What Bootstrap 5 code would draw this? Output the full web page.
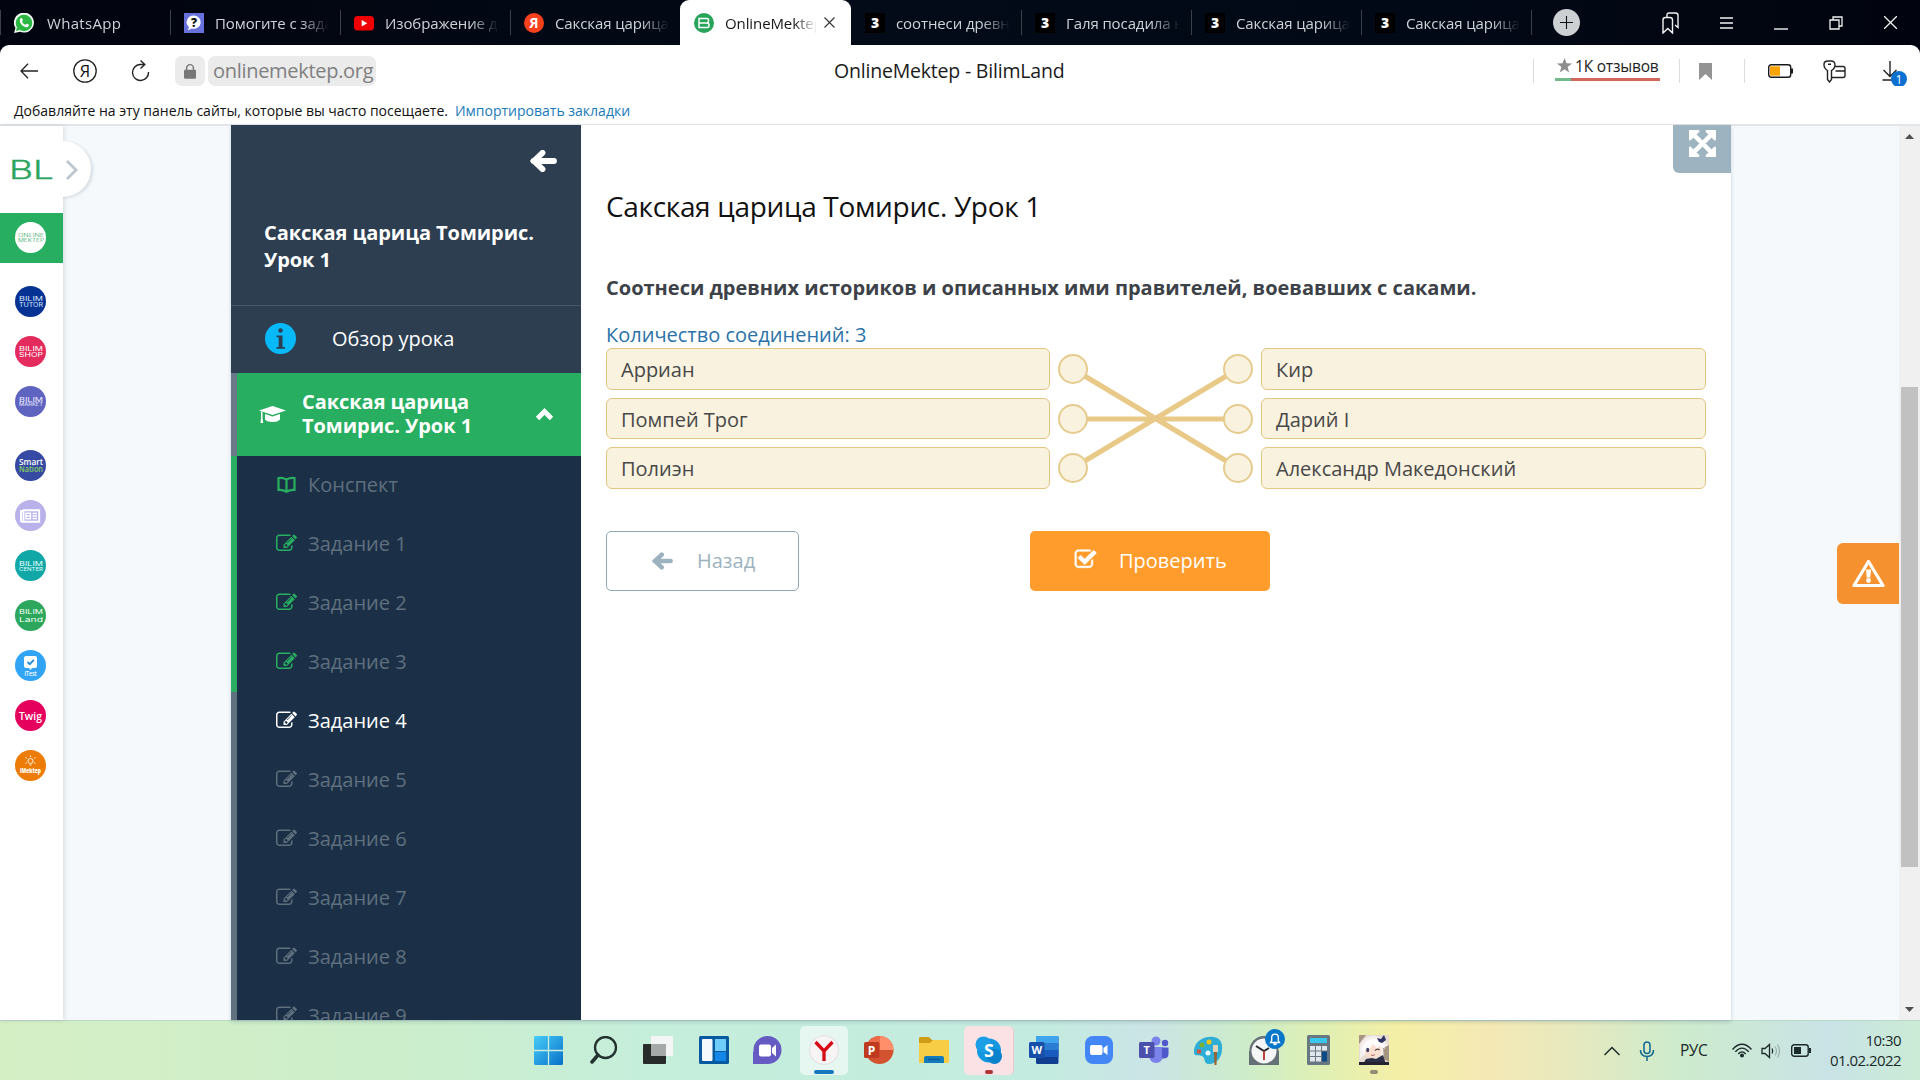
<!DOCTYPE html>
<html lang="ru">
<head>
<meta charset="utf-8">
<meta name="viewport" content="width=device-width, initial-scale=1">
<title>OnlineMektep - BilimLand</title>
<link href="https://cdn.jsdelivr.net/npm/bootstrap@5.3.0/dist/css/bootstrap.min.css" rel="stylesheet">
<style>
body{width:1920px;height:1080px;overflow:hidden;font-family:"Open Sans","Noto Sans",sans-serif;background:#01040f}
svg{display:block;flex:none}
.tabbar{height:45px;background:linear-gradient(90deg,#02040f,#020b17 45%,#020916 75%,#01040e);color:#cfd3d8}
.tab-item{width:170px;height:45px;padding-left:14px;gap:11px;position:relative}
.tab-item:not(.is-on):not(.no-line)::after{content:"";position:absolute;right:-1px;top:10px;width:1px;height:25px;background:#39414b}
.tab-item:first-child::before{content:"";position:absolute;left:0;top:10px;width:1px;height:25px;background:#39414b}
.tab-name{width:114px;overflow:hidden;white-space:nowrap;font-size:15px;letter-spacing:-.1px;line-height:24px;-webkit-mask-image:linear-gradient(90deg,#000 75%,transparent);mask-image:linear-gradient(90deg,#000 75%,transparent)}
.tab-name.first-name{letter-spacing:.3px;margin-left:2px}
.tab-item.is-on{width:171px;background:#fff;color:#16181b;border-radius:9px 9px 0 0}
.tab-item.is-on .tab-name{width:92px}
.plus{width:27px;height:27px;border-radius:50%;background:#cdd0d3;margin-left:22px}
.toolbar{height:52px;background:#fff;border-radius:9px 9px 0 0}
.pill{height:30px;background:#ebebeb;border-radius:7px}
.url{font-size:20px;color:#808080;letter-spacing:-.3px;line-height:30px;width:168px;padding-left:5px;white-space:nowrap}
.page-name{width:230px;font-size:19.5px;letter-spacing:-.2px;color:#1b1b1b;white-space:nowrap;text-align:center}
.vline{width:1px;height:24px;background:#dcdcdc}
.bookmarks{height:29px;background:#fff;border-bottom:2px solid #e3e6e8;padding-left:14px;font-size:14px;line-height:27px;color:#111;gap:7px;white-space:nowrap}
.bookmarks a{color:#1879b9;text-decoration:none}
.review{width:105px;font-size:15.5px;letter-spacing:-.2px;line-height:20px;color:#222;padding-bottom:6px}
.rate{height:3px;margin-top:2px;background:linear-gradient(90deg,#72b98c 16px,#d3675b 16px)}
.viewport-area{height:894px;background:#f5f9fc}
.rail{width:63px;background:#fff;box-shadow:1px 0 5px rgba(50,70,90,.17);position:relative;z-index:2}
.rail-toggle{position:absolute;left:35px;top:15px;width:56px;height:56px;border-radius:50%;background:#fff;box-shadow:2px 1px 3px rgba(50,70,90,.16)}
.rail-cover{position:absolute;inset:0;background:#fff;z-index:0}
.brand{height:87px;padding:31px 0 0 9px;position:relative;z-index:1}
.rail-cell{height:50px;padding-left:15px;position:relative;z-index:1;display:flex;align-items:center}
.rail-cell.is-on{background:#27ae60}
.rail-cell.is-on svg{margin-bottom:2px}
.sheet{margin-left:168px;margin-top:-1px;width:1500px;box-shadow:0 2px 4px rgba(50,80,110,.22)}
.side{width:350px;background:#2c3e50;color:#fff;font-size:20px}
.side-head{height:181px;border-bottom:1px solid #44586a;padding:25px 24px 0 33px}
.side-title{font-weight:700;line-height:27px;font-size:20px;letter-spacing:-.06px;margin-top:47px}
.overview{height:67px;padding:0 0 2px 34px;gap:36px}
.unit{height:83px;background:#27ae60;border-left:6px solid #6b7887;padding:0 27px 0 22px;font-weight:700;line-height:24px}
.unit span{margin:-2px 0 0 16px;letter-spacing:-.05px}
.task{height:59px;padding:0 0 2px 38px;gap:12px;background:#1b3047;border-left:6px solid #5f707f;color:#5f6f7e;line-height:30px}
.task svg{color:#5f6f7e}
.task.done{border-left-color:#2bae62}
.task.done svg{color:#27ae60}
.task.now,.task.now svg{color:#fff}
.task svg{margin-left:1px;margin-right:-1px}
.work{width:1150px;background:#fff;padding:0 0 0 25px}
.full-btn{width:58px;height:48px;border-radius:0 0 0 6px;background:#9db4c0;color:#fff}
.lesson{font-size:28px;line-height:40px;letter-spacing:-.33px;color:#111;margin-top:13px}
.ask{font-size:20px;font-weight:700;line-height:30px;color:#3d4248;margin-top:47px}
.amount{font-size:20px;line-height:28px;height:27px;color:#2a72a8;margin-top:18px}
.opt{border:1px solid #e3c682;border-radius:6px;background:#f9f2df;color:#484848;font-size:20px;line-height:41px;padding-left:14px}
.opts{width:445px;display:grid;grid-template-rows:42px 41px 42px;row-gap:8px}
.opts-left{width:444px}
.act{height:60px;border-radius:5px;font-size:20px;padding:0;display:flex;align-items:center;white-space:nowrap}
.act-back{width:193px;border:1px solid #90a9b8;color:#9db2bf;padding-left:45px;gap:24px}
.act-check{width:240px;background:#ff9c2b;color:#fff;padding-left:44px;gap:22px;border:0}
.act-check svg{stroke:#fff;stroke-width:40px;margin-top:-3px}
.gutter{width:168px}
.warn-btn{width:62px;height:61px;border-radius:6px 0 0 6px;background:#f5922f;margin-top:417px}
.sbar{width:21px;background:#f0f0f0;height:894px}
.thumb{width:17px;height:480px;background:#c1c1c1}
.taskbar{height:60px;border-top:1px solid #b9d8c8;background:linear-gradient(90deg,#d5efc5 0,#cceecb 400px,#c5eedb 650px,#c4ebe0 1050px,#cbe4e6 1150px,#cceccb 1240px,#dff0b4 1320px,#f5efa6 1400px,#f4e9b5 1490px,#e9e9bd 1560px,#cdebcd 1680px,#c9e3e6 1830px,#cbebd5 1920px)}
.slot{width:55px;height:59px;display:flex;align-items:center;justify-content:center;position:relative;padding-bottom:1px}
.slot-on{position:absolute;top:5px;height:49px;border-radius:5px}
.slot svg{position:relative}
.dash{position:absolute;bottom:6px;height:4px;border-radius:2px}
.clock{font-size:15px;line-height:20px;text-align:right;color:#1b2a2a;letter-spacing:-.55px;width:80px;padding-bottom:2px}
.lang{font-size:15.5px;letter-spacing:-.5px;color:#1b2a2a;width:26px}
</style>
<script src="https://cdn.jsdelivr.net/npm/bootstrap@5.3.0/dist/js/bootstrap.bundle.min.js"></script>
</head>
<body>
<svg width="0" height="0" class="position-absolute">
<symbol id="edit" viewBox="0 0 1792 1792"><path fill="currentColor" d="M888 1184l116-116-152-152-116 116v56h96v96h56zm440-720q-16-16-33 1l-350 350q-17 17-1 33t33-1l350-350q17-17 1-33zm80 594v190q0 119-84.500 203.500t-203.500 84.500h-832q-119 0-203.500-84.500t-84.500-203.500v-832q0-119 84.500-203.500t203.500-84.500h832q63 0 117 25 15 7 18 23 3 17-9 29l-49 49q-14 14-32 8-23-6-45-6h-832q-66 0-113 47t-47 113v832q0 66 47 113t113 47h832q66 0 113-47t47-113v-126q0-13 9-22l64-64q15-15 35-7t20 29zm-96-738l288 288-672 672h-288v-288zm444 132l-92 92-288-288 92-92q28-28 68-28t68 28l152 152q28 28 28 68t-28 68z"/></symbol>
<symbol id="check" viewBox="0 0 1792 1792"><path fill="currentColor" d="M1472 930v318q0 119-84.500 203.500t-203.500 84.500h-832q-119 0-203.500-84.500t-84.500-203.500v-832q0-119 84.500-203.500t203.500-84.500h832q63 0 117 25 15 7 18 23 3 17-9 29l-49 49q-10 10-23 10-3 0-9-2-23-6-45-6h-832q-66 0-113 47t-47 113v832q0 66 47 113t113 47h832q66 0 113-47t47-113v-254q0-13 9-22l64-64q10-10 23-10 6 0 12 3 20 8 20 29zm231-489l-814 814q-24 24-57 24t-57-24l-430-430q-24-24-24-57t24-57l110-110q24-24 57-24t57 24l263 263 647-647q24-24 57-24t57 24l110 110q24 24 24 57t-24 57z"/></symbol>
<symbol id="expand" viewBox="128 128 1536 1536"><path fill="currentColor" stroke="currentColor" stroke-width="40" d="M1411 541l-355 355 355 355 144-144q29-31 70-14 39 17 39 59v448q0 26-19 45t-45 19h-448q-42 0-59-40-17-39 14-69l144-144-355-355-355 355 144 144q31 30 14 69-17 40-59 40h-448q-26 0-45-19t-19-45v-448q0-42 40-59 39-17 69 14l144 144 355-355-355-355-144 144q-19 19-45 19-12 0-24-5-40-17-40-59v-448q0-26 19-45t45-19h448q42 0 59 40 17 39-14 69l-144 144 355 355 355-355-144-144q-31-30-14-69 17-40 59-40h448q26 0 45 19t19 45v448q0 42-39 59-13 5-25 5-26 0-45-19z"/></symbol>
<symbol id="arrow" viewBox="0 0 27 22"><path d="M3.500 11H24M12.500 2.800L4 11l8.500 8.200" fill="none" stroke="currentColor" stroke-width="5.800" stroke-linecap="round" stroke-linejoin="miter"/></symbol>
<symbol id="three" viewBox="0 0 20 20"><rect width="20" height="20" fill="#000"/><text x="10" y="15" text-anchor="middle" font-family="Open Sans,sans-serif" font-weight="800" font-size="14" fill="#fff">3</text></symbol>
</svg>

<header class="tabbar d-flex">
  <div class="tab-item d-flex align-items-center"><svg width="20" height="20" viewBox="0 0 20 20"><path d="M0 20l1.500-5A10 10 0 1 1 6 18.800z" fill="#f3fff3"/><circle cx="10" cy="10" r="8.300" fill="#2cb742"/><path d="M2 18l1-4 3 3z" fill="#2cb742"/><path d="M6.500 5.500c1-1 1.600-.4 2.300 1.700.2.700-.8 1-.7 1.500.8 1.600 1.800 2.500 3.400 3.100.5 0 .9-1.200 1.500-1 2 .9 2.300 1 1.700 2.200-1.500 2.600-5 .8-6.800-1-1.600-1.600-3-4.500-1.400-6.500z" fill="#fff"/></svg><span class="tab-name first-name">WhatsApp</span></div>
  <div class="tab-item d-flex align-items-center"><svg width="20" height="20" viewBox="0 0 20 20"><rect width="20" height="20" fill="#6870dc"/><path d="M10 2.500a7 6.600 0 1 1-2.300 12.900L4 17.500l.9-3.600A7 6.600 0 0 1 10 2.500z" fill="#fff"/><text x="10" y="14" text-anchor="middle" font-family="Open Sans" font-weight="800" font-size="12" fill="#111">?</text></svg><span class="tab-name">Помогите с заданием</span></div>
  <div class="tab-item d-flex align-items-center"><svg width="20" height="20" viewBox="0 0 20 20"><rect y="3" width="20" height="14.500" rx="3.500" fill="#f00000"/><path d="M7.700 7l5.500 3.200-5.500 3.200z" fill="#fff"/></svg><span class="tab-name">Изображение древних</span></div>
  <div class="tab-item no-line d-flex align-items-center"><svg width="20" height="20" viewBox="0 0 20 20"><circle cx="10" cy="10" r="10" fill="#f8401c"/><text x="10" y="15" text-anchor="middle" font-family="Open Sans" font-weight="700" font-size="14" fill="#fff">Я</text></svg><span class="tab-name">Сакская царица То</span></div>
  <div class="tab-item is-on d-flex align-items-center"><svg width="20" height="20" viewBox="0 0 20 20"><circle cx="10" cy="10" r="10" fill="#27a35a"/><path d="M5 5.500h8q1.500 0 1.500 1.500v1q0 1.500-1.500 2 2 0 2 2v1q0 1.500-1.500 1.500H5zM5 10h8" fill="none" stroke="#fff" stroke-width="1.500"/></svg><span class="tab-name">OnlineMektep</span><svg width="11" height="11" viewBox="0 0 11 11" style="margin-left:-4px"><path d="M.5.500l10 10m0-10l-10 10" stroke="#333" stroke-width="1.100"/></svg></div>
  <div class="tab-item d-flex align-items-center"><svg width="20" height="20"><use href="#three"/></svg><span class="tab-name">соотнеси древних</span></div>
  <div class="tab-item d-flex align-items-center"><svg width="20" height="20"><use href="#three"/></svg><span class="tab-name">Галя посадила на</span></div>
  <div class="tab-item d-flex align-items-center"><svg width="20" height="20"><use href="#three"/></svg><span class="tab-name">Сакская царица То</span></div>
  <div class="tab-item d-flex align-items-center"><svg width="20" height="20"><use href="#three"/></svg><span class="tab-name">Сакская царица То</span></div>
  <div class="d-flex align-items-center flex-grow-1">
    <span class="plus d-flex align-items-center justify-content-center"><svg width="13" height="13"><path d="M6.500 0v13M0 6.500h13" stroke="#111" stroke-width="1.100"/></svg></span>
    <div class="d-flex align-items-center ms-auto" style="gap:41px;margin-right:23px">
      <svg width="17" height="22" viewBox="0 0 17 22" fill="none" stroke="#f2f2f2" stroke-width="1.400"><path d="M1 21V8q0-2.500 2.500-2.500H8Q10.500 5.500 10.500 8v13L5.800 16.500zM5 5V3Q5 1 7 1h6.500Q16 1 16 3.500v12l-3-2.500"/></svg>
      <svg width="13" height="12" stroke="#f2f2f2" stroke-width="1.400"><path d="M0 1h13M0 6h13M0 11h13"/></svg>
      <svg width="14" height="14" stroke="#f2f2f2" stroke-width="1.400"><path d="M0 13h14"/></svg>
      <svg width="14" height="14" fill="none" stroke="#f2f2f2" stroke-width="1.300"><path d="M1 4h9v9H1zM4 4V1h9v9h-3"/></svg>
      <svg width="13" height="13" stroke="#f2f2f2" stroke-width="1.300"><path d="M0 0l13 13M13 0L0 13"/></svg>
    </div>
  </div>
</header>

<div class="toolbar d-flex align-items-center">
  <svg width="18" height="16" viewBox="0 0 18 16" style="margin-left:20px" fill="none" stroke="#222" stroke-width="1.300"><path d="M18 8H1M8 .7L1 8l7 7.300"/></svg>
  <svg width="24" height="24" viewBox="0 0 24 24" style="margin-left:35px"><circle cx="12" cy="12" r="11.200" fill="none" stroke="#222" stroke-width="1.300"/><text x="12" y="18" text-anchor="middle" font-family="Open Sans" font-size="16.500" fill="#111">Я</text></svg>
  <svg width="19" height="22" viewBox="0 0 19 22" style="margin-left:34px" fill="none" stroke="#222" stroke-width="1.400"><path d="M17.500 12A8 8 0 1 1 9 4.500h4M9.500.5l4.300 4-4.300 4"/></svg>
  <span class="pill d-flex align-items-center justify-content-center" style="width:30px;margin-left:25px"><svg width="12" height="17" viewBox="0 0 14 18"><rect y="7" width="14" height="10.500" rx="1.500" fill="#777"/><path d="M3 8V5a4 4 0 0 1 8 0v3" fill="none" stroke="#777" stroke-width="1.700"/></svg></span>
  <span class="pill url" style="margin-left:3px">onlinemektep.org</span>
  <span class="page-name" style="margin-left:458px">OnlineMektep - BilimLand</span>
  <span class="vline" style="margin-left:469px"></span>
  <div class="review" style="margin-left:21px"><div class="d-flex align-items-center" style="gap:3px;padding-left:2px"><svg width="15" height="15" viewBox="0 0 15 15"><path d="M7.500 0l2 5.300 5.500.2-4.400 3.400 1.600 5.600-4.700-3.200-4.700 3.200 1.600-5.600L0 5.500l5.500-.2z" fill="#8d8d8d"/></svg><span>1К отзывов</span></div><div class="rate"></div></div>
  <span class="vline" style="margin-left:19px"></span>
  <svg width="13" height="17" style="margin-left:19px"><path d="M0 0h13v17L6.500 11 0 17z" fill="#939393"/></svg>
  <span class="vline" style="margin-left:32px"></span>
  <svg width="25" height="14" viewBox="0 0 25 14" style="margin-left:23px"><rect x=".7" y=".7" width="22" height="12.600" rx="2.500" fill="none" stroke="#1a1a1a" stroke-width="1.400"/><rect x="2" y="2.300" width="10" height="9.400" fill="#f9a400"/><path d="M24 4.500v5" stroke="#1a1a1a" stroke-width="2"/></svg>
  <svg width="23" height="23" viewBox="0 0 23 23" style="margin-left:30px" fill="none" stroke="#222" stroke-width="1.400"><path d="M4.500 10.500Q1 8.500 1 4.500 1 1 5 1h3q4 0 4 4 0 3.500-3.500 5.500v9L6.500 22l-2-2.500zM5 4.300h3M12 6.500h8q2 0 2 2v7q0 2-2 2H9M12.500 11H22"/></svg>
  <div class="position-relative" style="margin-left:36px"><svg width="26" height="30" viewBox="0 0 26 30"><path d="M8 5v15M1.500 14L8 20.500l6.500-6.500M.5 24H11" fill="none" stroke="#222" stroke-width="1.400"/><circle cx="17" cy="25" r="8" fill="#0b70cf" transform="translate(0 -2)"/><text x="17" y="27.500" font-size="12" font-family="Open Sans" fill="#fff" text-anchor="middle">1</text></svg></div>
</div>
<div class="bookmarks d-flex"><span>Добавляйте на эту панель сайты, которые вы часто посещаете.</span><a href="#">Импортировать закладки</a></div>

<div class="viewport-area d-flex">
  <nav class="rail">
    <div class="rail-toggle"></div><div class="rail-cover"></div>
    <div class="brand"><svg width="74" height="26" viewBox="0 0 74 26"><text x="0" y="21.500" font-family="Inter,sans-serif" font-size="25" font-weight="300" fill="#2ba55e" stroke="#2ba55e" stroke-width=".3" textLength="45" lengthAdjust="spacingAndGlyphs">BL</text><path d="M58 4l9 9-9 9" fill="none" stroke="#bcc6cf" stroke-width="2.800"/></svg></div>
    <div class="rail-cell is-on"><svg width="31" height="31" font-family="Inter,sans-serif"><circle cx="15.500" cy="15.500" r="15.500" fill="#fff"/><g fill="#2ba55e" font-size="5" font-weight="300"><text x="3" y="14.500" textLength="26" lengthAdjust="spacingAndGlyphs">ONLINE</text><text x="3" y="20" textLength="26" lengthAdjust="spacingAndGlyphs">MEKTEP</text></g></svg></div>
    <div class="rail-cell" style="margin-top:13px"><svg width="31" height="31" font-family="Inter,sans-serif"><circle cx="15.500" cy="15.500" r="15.500" fill="#063393"/><g fill="#dce5ff" font-size="6.800"><text x="4" y="15" textLength="24" lengthAdjust="spacingAndGlyphs">BILIM</text><text x="4" y="20.500" textLength="24" font-size="5.800" lengthAdjust="spacingAndGlyphs">TUTOR</text></g></svg></div>
    <div class="rail-cell"><svg width="31" height="31" font-family="Inter,sans-serif"><circle cx="15.500" cy="15.500" r="15.500" fill="#e32b5d"/><g fill="#fff" font-size="6.800"><text x="4" y="15" textLength="24" lengthAdjust="spacingAndGlyphs">BILIM</text><text x="4" y="21" textLength="24" lengthAdjust="spacingAndGlyphs">SHOP</text></g></svg></div>
    <div class="rail-cell"><svg width="31" height="31" font-family="Inter,sans-serif"><circle cx="15.500" cy="15.500" r="15.500" fill="#6064c1"/><g fill="#eeeeff" font-size="6.800"><text x="4" y="15.500" textLength="24" lengthAdjust="spacingAndGlyphs">BILIM</text><text x="4" y="20" font-size="4.200" textLength="24" lengthAdjust="spacingAndGlyphs">MARKET</text></g></svg></div>
    <div class="rail-cell" style="margin-top:14px"><svg width="31" height="31" font-family="Open Sans,sans-serif"><circle cx="15.500" cy="15.500" r="15.500" fill="#364aa4"/><g font-size="8" font-weight="600"><text x="4" y="15" fill="#fff" textLength="24" lengthAdjust="spacingAndGlyphs">Smart</text><text x="4" y="21.500" fill="#83cf5f" textLength="24" lengthAdjust="spacingAndGlyphs">Nation</text></g></svg></div>
    <div class="rail-cell"><svg width="31" height="31"><circle cx="15.500" cy="15.500" r="15.500" fill="#b9b2ea"/><path d="M8.500 10.300h15.700v11.500H7q-1 0-1-1.500V11h2.500zM8.500 11v10" fill="none" stroke="#fff" stroke-width="1.900"/><path d="M11 13.200h4.500v5.500H11zM11 16h4.500M17.500 13.500H22M17.500 16H22M17.500 18.500H22" fill="none" stroke="#fff" stroke-width="1.400"/></svg></div>
    <div class="rail-cell"><svg width="31" height="31" font-family="Inter,sans-serif"><circle cx="15.500" cy="15.500" r="15.500" fill="#10a7a6"/><g fill="#e5ffff" font-size="6.800"><text x="4" y="16" textLength="24" lengthAdjust="spacingAndGlyphs">BILIM</text><text x="4" y="20.500" font-size="4.800" textLength="24" lengthAdjust="spacingAndGlyphs">CENTER</text></g></svg></div>
    <div class="rail-cell"><svg width="31" height="31" font-family="Inter,sans-serif"><circle cx="15.500" cy="15.500" r="15.500" fill="#2da75d"/><g fill="#f0fff5" font-size="6.500"><text x="4" y="14" textLength="24" lengthAdjust="spacingAndGlyphs">BILIM</text><text x="4" y="22" textLength="24" lengthAdjust="spacingAndGlyphs">Land</text></g></svg></div>
    <div class="rail-cell"><svg width="31" height="31" font-family="Open Sans,sans-serif"><circle cx="15.500" cy="15.500" r="15.500" fill="#31a4f5"/><path d="M11 6h9q2 0 2 2v8q0 2-2 2h-3l-1.500 2L14 18h-3q-2 0-2-2V8q0-2 2-2z" fill="#fff"/><path d="M12.500 12l2.300 2.200 4-4.400" fill="none" stroke="#248dda" stroke-width="1.800"/><text x="9.500" y="26" fill="#fff" font-size="7" font-weight="600" textLength="12" lengthAdjust="spacingAndGlyphs">iTest</text></svg></div>
    <div class="rail-cell"><svg width="31" height="31" font-family="Open Sans,sans-serif"><circle cx="15.500" cy="15.500" r="15.500" fill="#e5005e"/><text x="4" y="19.500" fill="#fff" font-size="11.500" font-weight="600" textLength="23" lengthAdjust="spacingAndGlyphs">Twig</text></svg></div>
    <div class="rail-cell"><svg width="31" height="31" font-family="Open Sans,sans-serif"><circle cx="15.500" cy="15.500" r="15.500" fill="#ec7c05"/><circle cx="15.500" cy="11" r="2.500" fill="none" stroke="#fff" stroke-width=".9"/><path d="M15.500 7V5.500M12 8.500l-1.500-1M19 8.500l1.500-1M12 12.500l-1.500 1M19 12.500l1.500 1M14.500 15h2" stroke="#fff" stroke-width=".9"/><text x="5" y="22.500" fill="#fff" font-size="6" font-weight="800" textLength="21" lengthAdjust="spacingAndGlyphs">iMektep</text></svg></div>
  </nav>

  <div class="sheet d-flex flex-shrink-0">
    <aside class="side overflow-hidden">
      <div class="side-head">
        <svg width="27" height="22" class="ms-auto"><use href="#arrow"/></svg>
        <div class="side-title">Сакская царица Томирис.<br>Урок 1</div>
      </div>
      <div class="overview d-flex align-items-center">
        <svg width="31" height="31"><circle cx="15.500" cy="15.500" r="15.500" fill="#08b9fa"/><circle cx="15.500" cy="7.500" r="2.200" fill="#2c3e50"/><path d="M11.500 12.500h6v11.500h2.500v1.800h-8.500V24h2.200v-9.700h-2.200z" fill="#2c3e50"/></svg><span>Обзор урока</span>
      </div>
      <div class="unit d-flex align-items-center">
        <svg width="27" height="19" viewBox="0 0 27 19" fill="#fff"><path d="M13.500 1L27 5.500 13.500 10 0 5.500z"/><path d="M6 9l7.500 2.500L21 9v5.500Q19 17 13.500 17T6 14.500zM2 6.500h1.500V13l.7 5H1.500L2 13z"/></svg>
        <span>Сакская царица<br>Томирис. Урок 1</span>
        <svg width="19" height="13" class="ms-auto"><path d="M2.500 10.500l7-7 7 7" fill="none" stroke="#fff" stroke-width="4.800"/></svg>
      </div>
      <div class="task done d-flex align-items-center"><svg width="21" height="18" viewBox="0 0 21 18"><path d="M10.500 3.500Q7 1.500 2.500 2v12q4.500-.3 8 1.700 3.500-2 8-1.700V2q-4.500-.5-8 1.500zm0 0v12" fill="none" stroke="currentColor" stroke-width="2.200"/></svg><span>Конспект</span></div>
      <div class="task done d-flex align-items-center"><svg width="21" height="21"><use href="#edit"/></svg><span>Задание 1</span></div>
      <div class="task done d-flex align-items-center"><svg width="21" height="21"><use href="#edit"/></svg><span>Задание 2</span></div>
      <div class="task done d-flex align-items-center"><svg width="21" height="21"><use href="#edit"/></svg><span>Задание 3</span></div>
      <div class="task now d-flex align-items-center"><svg width="21" height="21"><use href="#edit"/></svg><span>Задание 4</span></div>
      <div class="task d-flex align-items-center"><svg width="21" height="21"><use href="#edit"/></svg><span>Задание 5</span></div>
      <div class="task d-flex align-items-center"><svg width="21" height="21"><use href="#edit"/></svg><span>Задание 6</span></div>
      <div class="task d-flex align-items-center"><svg width="21" height="21"><use href="#edit"/></svg><span>Задание 7</span></div>
      <div class="task d-flex align-items-center"><svg width="21" height="21"><use href="#edit"/></svg><span>Задание 8</span></div>
      <div class="task d-flex align-items-center"><svg width="21" height="21"><use href="#edit"/></svg><span>Задание 9</span></div>
    </aside>
    <main class="work">
      <div class="full-btn ms-auto d-flex justify-content-center"><svg width="27" height="27" style="margin-top:5px"><use href="#expand"/></svg></div>
      <div class="lesson">Сакская царица Томирис. Урок 1</div>
      <div class="ask">Соотнеси древних историков и описанных ими правителей, воевавших с саками.</div>
      <div class="amount">Количество соединений: 3</div>
      <div class="d-flex">
        <div class="opts opts-left"><div class="opt">Арриан</div><div class="opt">Помпей Трог</div><div class="opt">Полиэн</div></div>
        <svg width="211" height="141" viewBox="1050 348 211 141"><g stroke="#e8c987" stroke-width="5"><path d="M1073 369l165 99M1073 419h165M1073 468l165-99"/></g><g fill="#f9f2df" stroke="#e5cb8e" stroke-width="2"><circle cx="1073" cy="369" r="14"/><circle cx="1073" cy="419" r="14"/><circle cx="1073" cy="468" r="14"/><circle cx="1238" cy="369" r="14"/><circle cx="1238" cy="419" r="14"/><circle cx="1238" cy="468" r="14"/></g></svg>
        <div class="opts"><div class="opt">Кир</div><div class="opt">Дарий I</div><div class="opt">Александр Македонский</div></div>
      </div>
      <div class="d-flex" style="margin-top:42px">
        <button class="btn act act-back"><svg width="21" height="18"><use href="#arrow"/></svg>Назад</button>
        <button class="btn act act-check" style="margin-left:231px"><svg width="23" height="23"><use href="#check"/></svg>Проверить</button>
      </div>
    </main>
  </div>
  <div class="gutter d-flex justify-content-end"><div class="warn-btn d-flex align-items-center justify-content-center"><svg width="33" height="29" viewBox="0 0 33 29"><path d="M16.500 2.500L31 26.500H2z" fill="none" stroke="#fff" stroke-width="3.200" stroke-linejoin="round"/><path d="M14 10.500h5l-.7 8h-3.600z" fill="#fff"/><circle cx="16.500" cy="21.500" r="2.400" fill="#fff"/></svg></div></div>
  <div class="sbar d-flex flex-column align-items-center"><svg width="9" height="6" style="margin-top:8px"><path d="M0 5l4.500-5L9 5z" fill="#505050"/></svg><div class="thumb" style="margin-top:247px"></div><svg width="9" height="6" class="mt-auto" style="margin-bottom:7px"><path d="M0 0l4.500 5L9 0z" fill="#505050"/></svg></div>
</div>

<footer class="taskbar d-flex align-items-center">
  <div class="d-flex" style="margin-left:521px">
    <div class="slot"><svg width="29" height="29"><defs><linearGradient id="wg" x2="1" y2="1"><stop stop-color="#46cdf9"/><stop offset="1" stop-color="#0870c8"/></linearGradient></defs><rect width="29" height="29" rx="1.500" fill="url(#wg)"/><path d="M14.500 0v29M0 14.500h29" stroke="#c9eedd" stroke-width="1.300"/></svg></div>
    <div class="slot"><svg width="28" height="28" fill="none" stroke="#23312f"><circle cx="15.500" cy="11.500" r="10.500" stroke-width="2.300"/><path d="M8 19l-6 7" stroke-width="3.500" stroke-linecap="round"/></svg></div>
    <div class="slot"><svg width="32" height="29"><rect y="8" width="23" height="20" rx="1" fill="#272c2b"/><rect x="8" y="0" width="22" height="20" rx="1" fill="#f3f6f4"/><path d="M8 8h15v12H8z" fill="#a5aaa8"/></svg></div>
    <div class="slot"><svg width="30" height="28"><rect width="30" height="28" rx="1.500" fill="#075a9f"/><rect x="3" y="3" width="10.500" height="22" rx="1" fill="#f5f9fc"/><path d="M16 3h11v12H16z" fill="#70cdfa"/><path d="M16 16h11v9H16z" fill="#1287e8"/></svg></div>
    <div class="slot"><svg width="31" height="29"><circle cx="14.500" cy="14" r="14" fill="#665bc2"/><path d="M0 15v13h13z" fill="#665bc2"/><rect x="6" y="8.500" width="12" height="12" rx="2" fill="#fff"/><path d="M19 12l4-3.500v12L19 17z" fill="#fff"/></svg></div>
    <div class="slot"><div class="slot-on" style="width:48px;left:4px;background:#e6f6f1"></div><svg width="30" height="30"><circle cx="15" cy="15" r="14.500" fill="#f7f4f5" stroke="#e4dfe0"/><path d="M6.500 7l8.500 9 8.500-9M15 15v11" fill="none" stroke="#d50c18" stroke-width="3.300"/></svg><span class="dash" style="width:20px;background:#1578bf"></span></div>
    <div class="slot"><svg width="30" height="29"><circle cx="15.500" cy="14" r="14" fill="#d35230"/><path d="M15.500 0a14 14 0 0 1 14 14h-14z" fill="#ff8f6b"/><path d="M15.500 0a14 14 0 0 0-12.500 9l5 5h7.500z" fill="#ed6c47"/><rect y="6" width="15.500" height="16" rx="1.500" fill="#bf3b20"/><text x="7.500" y="18.500" text-anchor="middle" font-size="12" font-weight="700" fill="#fff">P</text></svg></div>
    <div class="slot"><svg width="30" height="28"><path d="M0 2q0-1 1-1h9l3 3h17v22H0z" fill="#cf9e16"/><path d="M0 7h11l3-3h15q1 0 1 1v21q0 1-1 1H0z" fill="#f8cd46"/><path d="M5 27v-5q0-2 2-2h16q2 0 2 2v5z" fill="#137cbc"/><path d="M9 23.500h12" stroke="#0a5d99" stroke-width="1.500"/></svg></div>
    <div class="slot"><div class="slot-on" style="width:50px;left:3px;background:#fae2e5;border-right:1px solid #ecc9ce"></div><svg width="28" height="29"><circle cx="14" cy="14.500" r="12" fill="#1196df"/><circle cx="8.500" cy="8.500" r="8" fill="#1b9ee5"/><circle cx="19.500" cy="20.500" r="7.500" fill="#0a83cc"/><text x="14" y="21" text-anchor="middle" font-size="18" font-weight="700" fill="#fff">S</text></svg><span class="dash" style="width:8px;background:#ae3535"></span></div>
    <div class="slot"><svg width="30" height="28"><rect x="7" width="22.500" height="28" rx="1.500" fill="#103f91"/><path d="M7 0h22.500v7H7z" fill="#41a5ee"/><path d="M7 7h22.500v7H7z" fill="#2b7cd3"/><path d="M7 14h22.500v7H7z" fill="#185abd"/><rect y="6" width="15.500" height="16" rx="1.500" fill="#174fa9"/><text x="7.700" y="18" text-anchor="middle" font-size="11" font-weight="700" fill="#fff">W</text></svg></div>
    <div class="slot"><svg width="28" height="28"><rect width="28" height="28" rx="8" fill="#4387f6"/><rect x="5" y="9" width="12.500" height="10" rx="2" fill="#fff"/><path d="M18.500 12l4-3v10l-4-3z" fill="#fff"/></svg></div>
    <div class="slot"><svg width="30" height="28"><circle cx="17" cy="5" r="4.500" fill="#7b83eb"/><circle cx="26" cy="7" r="3.200" fill="#5059c9"/><path d="M10 11h14v9q-1 7-7 7t-7-7z" fill="#7b83eb"/><path d="M23 11.500h6.500V18q0 5-6.500 4.500z" fill="#5059c9"/><rect y="6" width="15.500" height="16" rx="1.500" fill="#4b50ad"/><text x="7.700" y="18" text-anchor="middle" font-size="11" font-weight="700" fill="#fff">T</text></svg></div>
    <div class="slot"><svg width="30" height="29"><path d="M15 1C24 0 29 5 28 13c0 8-5 15-13 15-6 0-3-6-7-8s-7 1-8-3C-1 8 7 1 15 1z" fill="#2eaed5"/><circle cx="8" cy="9" r="2.500" fill="#79b32d"/><circle cx="15" cy="6" r="2.500" fill="#f4c51b"/><circle cx="5" cy="15.500" r="2.300" fill="#d1583f"/><circle cx="14" cy="17" r="2.500" fill="#e4faff"/><path d="M19 9h5v7h-5z" fill="#e1d3b9"/><path d="M20 16h3l-.5 13h-2z" fill="#97632f"/></svg></div>
    <div class="slot"><svg width="30" height="29"><path d="M0 15h30v14H0z" fill="#656f76"/><circle cx="15" cy="14.500" r="14.500" fill="#656f76"/><circle cx="15" cy="15" r="12.500" fill="#f4f5f6"/><path d="M7 10l8 5 5-3" fill="none" stroke="#252c31" stroke-width="2"/><path d="M15 15v9" stroke="#bd4137" stroke-width="2"/></svg><svg width="20" height="20" class="position-absolute" style="right:6px;top:8px"><circle cx="10" cy="10" r="10" fill="#0877c9"/><path d="M5.500 13.500l1.200-2V8.500a3.300 3.300 0 0 1 6.600 0v3l1.200 2zM8.500 14.500q1.500 2 3 0" fill="none" stroke="#fff" stroke-width="1.300"/></svg></div>
    <div class="slot"><svg width="23" height="30"><rect width="23" height="30" rx="1.500" fill="#697780"/><rect x="3" y="3" width="17" height="5" fill="#3ac7ee"/><path d="M3 11h5v4.500H3zM9 11h5v4.500H9zM15 11h5v4.500h-5zM3 16.500h5V21H3zM9 16.500h5V21H9zM3 22h5v4.500H3zM9 22h5v4.500H9z" fill="#e1e8ed"/><path d="M15 16.500h5v10h-5z" fill="#0b4b86"/></svg></div>
    <div class="slot"><svg width="30" height="30"><rect width="30" height="30" fill="#e6dcd2"/><path d="M1 10Q5 1 15 1t14 10v12l-6-3H5l-4 4z" fill="#f5f0ee"/><path d="M0 0h7L0 9zM24 13l6-3v17l-5-3z" fill="#a79584"/><ellipse cx="14" cy="16" rx="8.500" ry="7" fill="#fbdfd0"/><path d="M3 14Q6 4 15 4t11 10l-5-4-3 3-4-4-5 7-3-2-1 6z" fill="#fffdfb"/><path d="M18 3l4 1 3-4 2 5-4 3-3-1z" fill="#2d3560"/><ellipse cx="8.700" cy="15" rx="1.500" ry="2.200" fill="#3c3f66"/><path d="M16 15.500q2.500-2.500 4.500-.5" fill="none" stroke="#55404a" stroke-width="1.200"/><path d="M12 20q2 1.500 4-.5" fill="none" stroke="#b3705f"/><path d="M7 24l6-1 4 1 7-4 3 9H4z" fill="#2c2e45"/><path d="M0 27h30v3H0z" fill="#24242e"/></svg><span class="dash" style="width:8px;background:#938b75"></span></div>
  </div>
  <div class="d-flex align-items-center ms-auto" style="margin-right:19px">
    <svg width="16" height="10" fill="none" stroke="#1b2a2a" stroke-width="1.500"><path d="M.5 9L8 1.500 15.500 9"/></svg>
    <svg width="16" height="20" style="margin-left:19px" fill="none" stroke="#1b6c91" stroke-width="1.600"><rect x="5" y="1" width="6" height="11.500" rx="3"/><path d="M1.500 9q0 6.500 6.500 6.500T14.500 9M8 15.500V20"/></svg>
    <span class="lang" style="margin-left:25px">РУС</span>
    <svg width="20" height="15" viewBox="0 0 20 15" style="margin-left:26px" fill="none" stroke="#1b2a2a" stroke-width="1.400"><path d="M.5 6.500Q10-4 19.500 6.500M3.300 8.800Q10 1.500 16.700 8.800M6.300 11Q10 6.800 13.700 11"/><circle cx="10" cy="12.500" r="1.300" fill="#1b2a2a"/></svg>
    <svg width="20" height="16" viewBox="0 0 20 16" style="margin-left:9px" fill="none" stroke="#1b2a2a" stroke-width="1.300"><path d="M1 5.500h3L8.500 1.500v13L4 10.500H1zM11 5.500q1.500 2.500 0 5"/><path d="M14 3.500q3 4.500 0 9M16.500 1.500q4 6.500 0 13" stroke="#9eb3b0"/></svg>
    <svg width="20" height="13" viewBox="0 0 20 13" style="margin-left:10px"><rect x=".7" y=".7" width="16.500" height="11.600" rx="2.500" fill="none" stroke="#1b2a2a" stroke-width="1.400"/><path d="M3 3h7v7H3z" fill="#1b2a2a"/><path d="M19 4v5" stroke="#1b2a2a" stroke-width="2"/></svg>
    <div class="clock" style="margin-left:10px">10:30<br>01.02.2022</div>
  </div>
</footer>
</body>
</html>
